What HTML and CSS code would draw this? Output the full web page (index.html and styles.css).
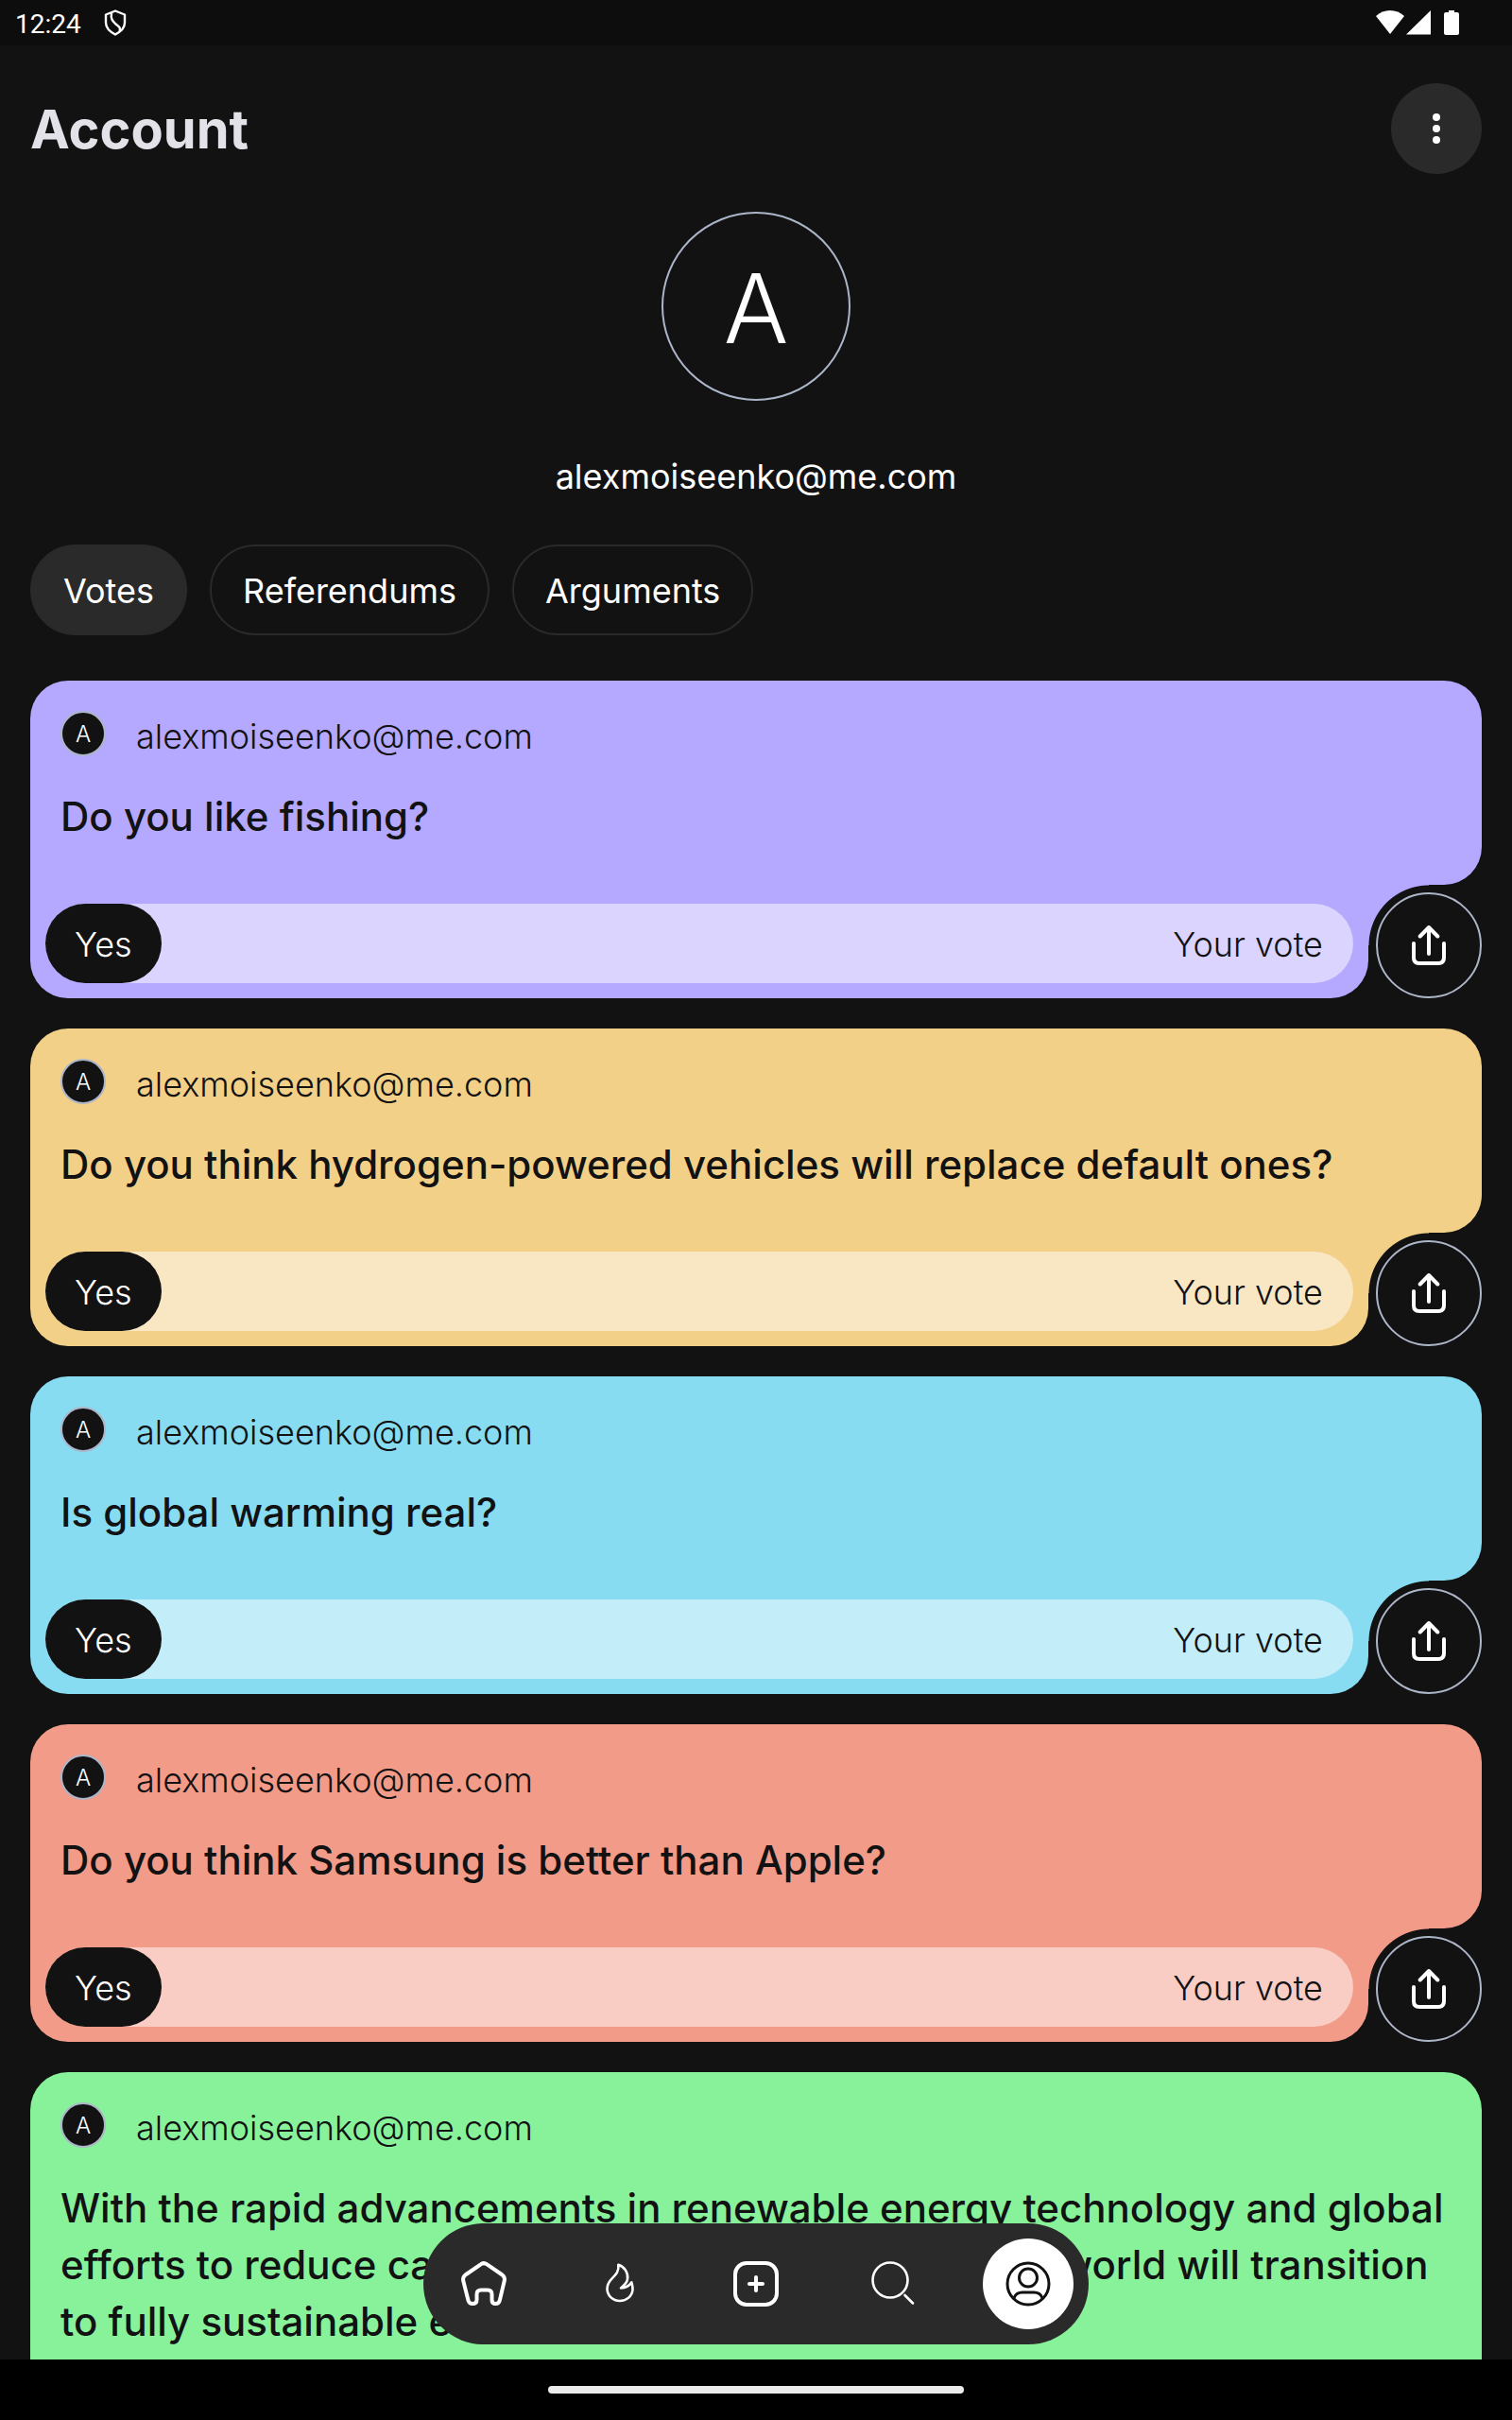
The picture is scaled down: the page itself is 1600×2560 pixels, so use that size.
FILE: index.html
```html
<!DOCTYPE html>
<html lang="en">
<head>
<meta charset="utf-8">
<meta name="viewport" content="width=device-width, initial-scale=1">
<title>Account</title>
<link rel="stylesheet" href="styles.css">
</head>
<body>
<svg class="defs" aria-hidden="true">
  <symbol id="share" viewBox="0 0 48 48">
    <path d="M8 22v15q0 6 6 6h20q6 0 6-6V22M24 33V5M14.700 14.500L24 5l9.300 9.500" fill="none" stroke="currentColor" stroke-width="4" stroke-linecap="round" stroke-linejoin="round"/>
  </symbol>
</svg>

<div class="status-bar">
  <span class="clock">12:24</span>
  <svg class="shield" viewBox="0 0 24 28" fill="none" stroke="currentColor" stroke-width="2.400" stroke-linejoin="round"><path d="M12 1.500L22 5.500V14C22 20 18 23 12 26.500C6 23 2 20 2 14V5.500Z"/><path d="M8 4C7 10 9 12 12 15C16 18.500 18 19 16.500 23"/></svg>
  <span class="signals">
    <svg width="30" height="26" viewBox="0 0 30 26" fill="currentColor"><path d="M0 6C8-2 22-2 30 6L15 25Z"/></svg>
    <svg width="26" height="26" viewBox="0 0 26 26" fill="currentColor"><path d="M0 25.500L26 0V25.500Z"/></svg>
    <svg class="battery" width="16" height="26" viewBox="0 0 16 26" fill="currentColor"><path d="M5 0h6v2h3q2 0 2 2v20q0 2-2 2H2q-2 0-2-2V4q0-2 2-2h3z"/></svg>
  </span>
</div>

<main class="screen">
  <header class="top">
    <h1>Account</h1>
    <button class="more" aria-label="More options"><svg width="8" height="32" viewBox="0 0 8 32" fill="currentColor"><circle cx="4" cy="4" r="4"/><circle cx="4" cy="16" r="4"/><circle cx="4" cy="28" r="4"/></svg></button>
  </header>

  <section class="profile">
    <div class="avatar">A</div>
    <p class="email">alexmoiseenko@me.com</p>
  </section>

  <div class="tabs">
    <button class="tab active">Votes</button>
    <button class="tab">Referendums</button>
    <button class="tab">Arguments</button>
  </div>

  <div class="cards">
    <article class="card violet">
      <div class="card-body">
        <div class="author"><span class="badge">A</span><span>alexmoiseenko@me.com</span></div>
        <h2>Do you like fishing?</h2>
      </div>
      <div class="card-foot">
        <div class="vote-area"><div class="vote"><span class="answer">Yes</span><span class="label">Your vote</span></div></div>
        <button class="share" aria-label="Share"><svg><use href="#share"/></svg></button>
      </div>
    </article>
    <article class="card amber">
      <div class="card-body">
        <div class="author"><span class="badge">A</span><span>alexmoiseenko@me.com</span></div>
        <h2>Do you think hydrogen-powered vehicles will replace default ones?</h2>
      </div>
      <div class="card-foot">
        <div class="vote-area"><div class="vote"><span class="answer">Yes</span><span class="label">Your vote</span></div></div>
        <button class="share" aria-label="Share"><svg><use href="#share"/></svg></button>
      </div>
    </article>
    <article class="card cyan">
      <div class="card-body">
        <div class="author"><span class="badge">A</span><span>alexmoiseenko@me.com</span></div>
        <h2>Is global warming real?</h2>
      </div>
      <div class="card-foot">
        <div class="vote-area"><div class="vote"><span class="answer">Yes</span><span class="label">Your vote</span></div></div>
        <button class="share" aria-label="Share"><svg><use href="#share"/></svg></button>
      </div>
    </article>
    <article class="card coral">
      <div class="card-body">
        <div class="author"><span class="badge">A</span><span>alexmoiseenko@me.com</span></div>
        <h2>Do you think Samsung is better than Apple?</h2>
      </div>
      <div class="card-foot">
        <div class="vote-area"><div class="vote"><span class="answer">Yes</span><span class="label">Your vote</span></div></div>
        <button class="share" aria-label="Share"><svg><use href="#share"/></svg></button>
      </div>
    </article>
    <article class="card green">
      <div class="card-body">
        <div class="author"><span class="badge">A</span><span>alexmoiseenko@me.com</span></div>
        <h2>With the rapid advancements in renewable energy technology and global efforts to reduce carbon emissions, do you think the world will transition to fully sustainable energy?</h2>
      </div>
    </article>
  </div>
</main>

<nav class="dock" aria-label="Main">
  <button aria-label="Home"><svg viewBox="0 0 48 48" stroke-width="4"><path d="M21 3.200Q24 1 27 3.200L43.500 14.500Q46.500 16.800 45.800 20.500L40.800 41.500Q40 45 36.500 45Q32.500 45 32.500 41V35Q32.500 30.500 28 30.500H21Q16.500 30.500 16.500 35V41Q16.500 45 12 45Q8.500 45 7.500 41.500L2.200 20.500Q1.500 16.800 4.500 14.500Z"/></svg></button>
  <button aria-label="Trending"><svg viewBox="0 0 48 48" stroke-width="2.600"><path d="M22.300 3.700C29 6 33 12 32 19C31.500 23 28 26 25 28.400C30 28.400 34 26 36.300 22.300C37 25 37.700 27 37.500 30C37 37 31 42 24 42C16 42 10.500 36 10.500 29C10.500 17 24 17 22.300 3.700Z"/></svg></button>
  <button aria-label="Create"><svg viewBox="0 0 48 48" stroke-width="4"><rect x="2" y="2" width="44" height="44" rx="12"/><path d="M24 17v14M17 24h14"/></svg></button>
  <button aria-label="Search"><svg viewBox="0 0 48 48" stroke-width="2.600"><circle cx="22" cy="20" r="18.500"/><path d="M37.500 36L46 44.500"/></svg></button>
  <button class="current" aria-label="Account"><svg viewBox="0 0 48 48" stroke-width="3"><circle cx="24" cy="24" r="22"/><circle cx="24" cy="17.500" r="9.500"/><path d="M9 39Q11 33 18 33H30Q37 33 39 39"/></svg></button>
</nav>

<div class="gesture-bar"><span></span></div>
</body>
</html>
```

FILE: styles.css
```css
* { box-sizing: border-box; }

body {
  margin: 0;
  height: 100vh;
  display: flex;
  flex-direction: column;
  position: relative;
  overflow: hidden;
  background: #121212;
  color: #fff;
  font-family: Inter, "Open Sans", sans-serif;
  font-size: 36px;
  font-weight: 300;
}

h1, h2, p { margin: 0; }

button {
  border: 0;
  padding: 0;
  background: none;
  color: inherit;
  font: inherit;
  cursor: pointer;
}

.defs { display: none; }

.status-bar {
  flex: none;
  height: 48px;
  padding: 0 56px 0 16px;
  display: flex;
  align-items: center;
  background: #0d0d0d;
  font-family: Roboto, sans-serif;
  font-size: 28px;
  font-weight: 400;
}
.clock { padding-top: 2px; }
.shield { width: 24px; height: 28px; margin-left: 24px; }
.signals { margin-left: auto; display: flex; gap: 2px; }
.battery { margin-left: 12px; }

.screen {
  flex: 1;
  min-height: 0;
  overflow: hidden;
  padding: 40px 32px 0;
}

.top { display: flex; justify-content: space-between; align-items: center; }
h1 { padding-top: 2px; font-size: 56px; font-weight: 700; color: #e4e2e9; }
.more {
  display: flex;
  align-items: center;
  justify-content: center;
  width: 96px;
  height: 96px;
  border-radius: 50%;
  background: #2a2a2a;
}

.profile { display: flex; flex-direction: column; align-items: center; padding-top: 40px; }
.avatar {
  display: flex;
  align-items: center;
  justify-content: center;
  width: 200px;
  height: 200px;
  padding-top: 4px;
  border: 2px solid #adb5c9;
  border-radius: 50%;
  font-size: 102px;
}
.email { margin: 56px 0 48px; line-height: 48px; font-weight: 400; }

.tabs { display: flex; gap: 24px; }
.tab {
  height: 96px;
  padding: 2px 33px 0;
  border: 2px solid #2a2a2a;
  border-radius: 48px;
  font-weight: 400;
}
.tab.active { background: #2a2a2a; }

.cards { display: flex; flex-direction: column; gap: 32px; margin-top: 48px; }
.card { color: #121212; }
.violet { --fill: #b4a9ff; --bar: #dad4ff; }
.amber { --fill: #f2d088; --bar: #f9e7c4; }
.cyan { --fill: #87dcf2; --bar: #c3eef9; }
.coral { --fill: #f29b88; --bar: #f9cdc4; }
.green { --fill: #88f29b; --bar: #c4f9cd; }

.card-body {
  min-height: 216px;
  padding: 32px 30px 12px 32px;
  border-radius: 40px 40px 40px 0;
  background: var(--fill);
}
.author { display: flex; gap: 32px; line-height: 54px; }
.badge {
  width: 48px;
  height: 48px;
  border: 2px solid #adb5c9;
  border-radius: 50%;
  background: #121212;
  color: #fff;
  font-size: 24px;
  line-height: 46px;
  text-align: center;
}
h2 { margin-top: 28px; font-size: 42px; font-weight: 550; line-height: 60px; }

.card-foot { display: flex; gap: 8px; }
.vote-area {
  flex: 1;
  position: relative;
  padding: 20px 16px 16px;
  border-radius: 0 0 40px 40px;
  background: var(--fill);
}
/* concave corner that wraps round the share button */
.vote-area::after {
  content: "";
  position: absolute;
  left: 100%;
  top: 0;
  width: 64px;
  height: 64px;
  background: radial-gradient(circle at 100% 100%, transparent 63px, var(--fill) 64px);
}
.vote {
  display: flex;
  align-items: center;
  justify-content: space-between;
  height: 84px;
  padding-right: 32px;
  border-radius: 42px;
  background: var(--bar);
}
.answer, .label { padding-top: 2px; line-height: 82px; }
.answer {
  padding-left: 31px;
  padding-right: 31px;
  border-radius: 42px;
  background: #121212;
  color: #fff;
}
.share {
  position: relative;
  z-index: 1;
  align-self: flex-end;
  display: flex;
  align-items: center;
  justify-content: center;
  width: 112px;
  height: 112px;
  border: 2px solid #adb5c9;
  border-radius: 50%;
  color: #fff;
}
.share svg { width: 48px; height: 48px; }

.green .card-body { min-height: 336px; border-radius: 40px 40px 0 0; }

.dock {
  position: absolute;
  left: 50%;
  bottom: 80px;
  transform: translateX(-50%);
  z-index: 2;
  display: flex;
  gap: 48px;
  padding: 16px;
  border-radius: 64px;
  background: #2a2a2a;
}
.dock button {
  display: flex;
  align-items: center;
  justify-content: center;
  width: 96px;
  height: 96px;
  border-radius: 50%;
}
.dock svg {
  width: 48px;
  height: 48px;
  fill: none;
  stroke: currentColor;
  stroke-linecap: round;
  stroke-linejoin: round;
}
.dock .current { background: #fff; color: #121212; }

.gesture-bar {
  flex: none;
  display: flex;
  align-items: center;
  justify-content: center;
  height: 64px;
  background: #000;
}
.gesture-bar span { width: 440px; height: 8px; border-radius: 4px; background: #ebebeb; }
```
